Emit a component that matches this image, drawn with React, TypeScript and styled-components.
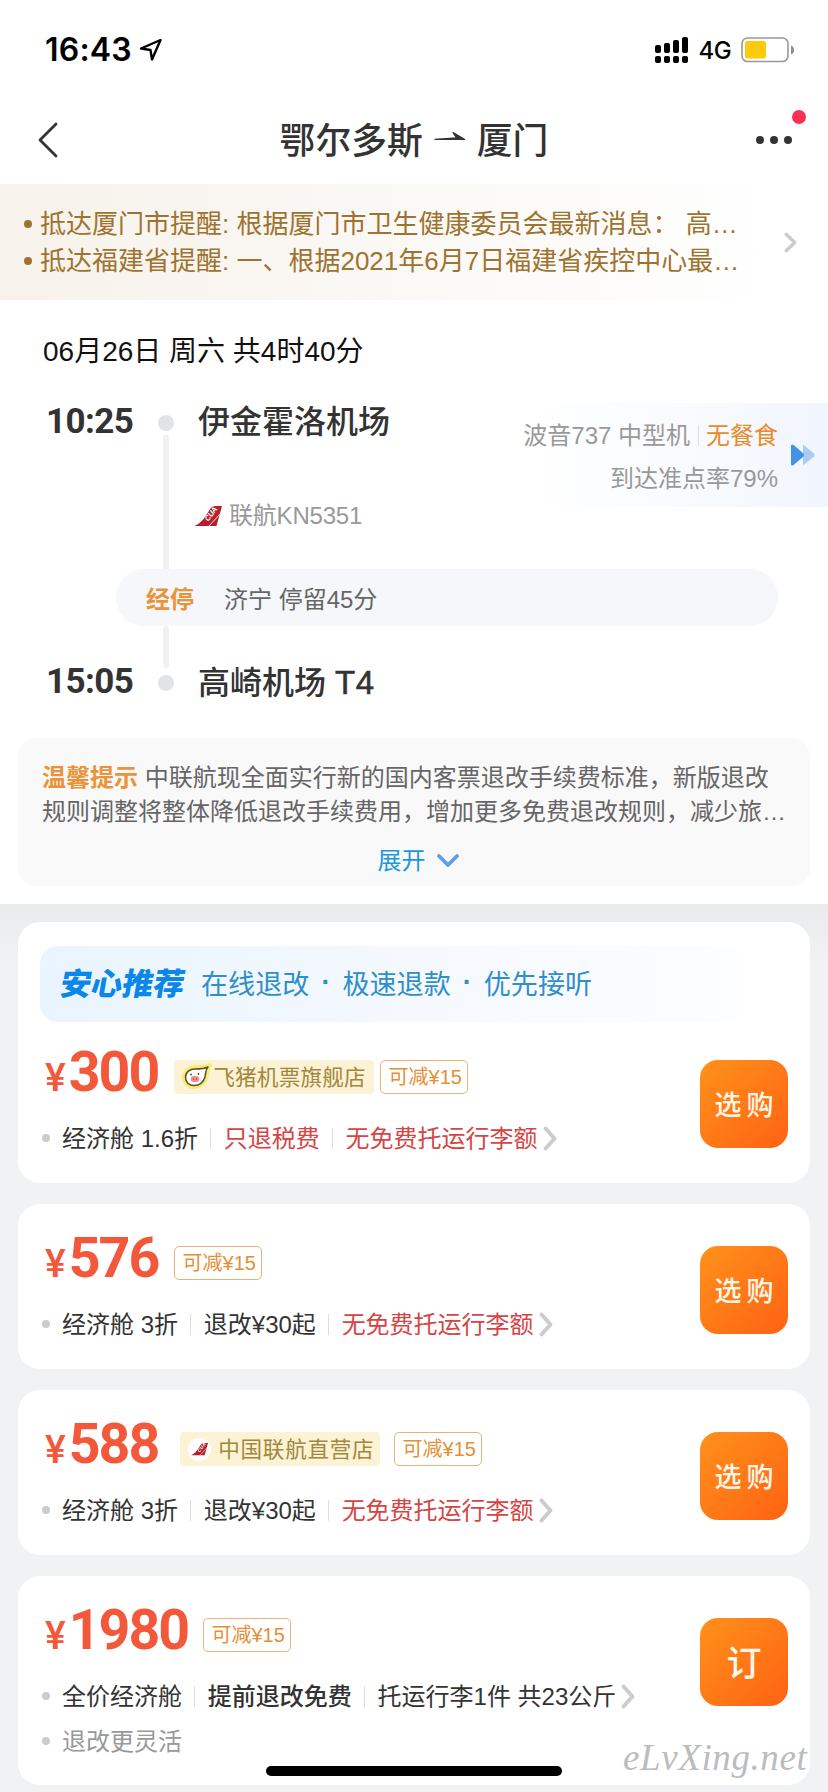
import React from "react";
import styled, { createGlobalStyle } from "styled-components";

const Global = createGlobalStyle`
  * { box-sizing: border-box; }
  body {
    margin: 0;
    background: #fff;
    font-family: "Liberation Sans", "Noto Sans CJK SC", sans-serif;
    color: #333;
  }
  svg { display: block; flex: none; overflow: visible; }
`;

const Screen = styled.div`
  position: relative;
  width: 828px;
  height: 1792px;
  overflow: hidden;
  display: flex;
  flex-direction: column;
  background: #fff;
`;

/* Status bar */
const StatusBar = styled.div`
  height: 96px;
  padding: 0 33px 0 45px;
  display: flex;
  align-items: center;
  justify-content: space-between;
`;
const StatusGroup = styled.div`
  display: flex;
  align-items: center;
  height: 30px;
  margin-top: 4px;
`;
const Clock = styled.span`
  font: 600 32px/30px Inter, sans-serif;
  letter-spacing: 0.2px;
  color: #000;
  margin-right: 7px;
`;
const Network = styled.span`
  font: 500 24px/30px Inter, sans-serif;
  letter-spacing: -0.6px;
  color: #000;
  margin: 2px 10px 0 10px;
`;

/* Navigation */
const NavBar = styled.div`
  height: 88px;
  padding: 0 22px 0 38px;
  display: grid;
  grid-template-columns: 88px 1fr 104px;
  align-items: center;
`;
const Title = styled.h1`
  margin: 0;
  padding-bottom: 4px;
  display: flex;
  justify-content: center;
  align-items: center;
  gap: 11px;
  font: 500 35.8px/48px "Noto Sans CJK SC", sans-serif;
  color: #333;

  svg {
    margin-top: 2px;
  }
`;
const More = styled.div`
  justify-self: end;
`;

/* Health notice */
const Notice = styled.div`
  height: 116px;
  padding: 0 31px 0 24px;
  display: flex;
  align-items: center;
  justify-content: space-between;
  background: linear-gradient(90deg, #f7f2eb 0%, #faf8f5 45%, #fff 95%);
`;
const NoticeList = styled.div`
  display: flex;
  flex-direction: column;
  padding-top: 1px;
`;
const NoticeLine = styled.div`
  height: 37px;
  display: flex;
  align-items: center;
  gap: 8px;
  font-size: 26px;
  line-height: 37px;
  color: #9e732f;
  white-space: pre;
`;
const Bullet = styled.i<{ $color: string }>`
  flex: none;
  width: 8px;
  height: 8px;
  border-radius: 50%;
  background: ${(p) => p.$color};
`;

/* Journey */
const Journey = styled.section`
  height: 604px;
  flex: none;
  padding-top: 32px;
`;
const DateLine = styled.div`
  height: 40px;
  padding-left: 43px;
  font-size: 28px;
  line-height: 40px;
  color: #111;
`;
const Timeline = styled.div`
  margin-top: 39px;
  display: grid;
  grid-template-columns: 110px 20px 1fr;
  grid-template-rows: 24px 134px 57px 45px 24px;
  padding-left: 46px;
`;
const Time = styled.div<{ $row: number }>`
  grid-area: ${(p) => p.$row} / 1;
  font: 700 35px/22px Roboto, sans-serif;
  letter-spacing: -0.6px;
  color: #333;
`;
const Stop = styled.i<{ $row: number }>`
  grid-area: ${(p) => p.$row} / 2;
  place-self: center;
  width: 16px;
  height: 16px;
  border-radius: 50%;
  background: #e2e3e6;
`;
const Track = styled.i<{ $row: number; $height: number }>`
  grid-area: ${(p) => p.$row} / 2;
  justify-self: center;
  width: 6px;
  height: ${(p) => p.$height}px;
  border-radius: 3px;
  background: #f1f1f2;
`;
const Airport = styled.div<{ $row: number }>`
  grid-area: ${(p) => p.$row} / 3;
  padding-left: 22px;
  font: 500 32px/23px "Liberation Sans", "Noto Sans CJK SC", sans-serif;
  color: #333;
  white-space: pre;
`;
const Terminal = styled.span`
  font-size: 33px;
  letter-spacing: 0.8px;
  -webkit-text-stroke: 0.6px #333;
`;
const Flight = styled.div`
  grid-area: 2 / 3;
  padding: 65px 0 0 18px;
  height: 97px;
  display: flex;
  align-items: center;
  gap: 7px;
  font-size: 24px;
  letter-spacing: -0.2px;
  line-height: 32px;
  color: #999;
`;
const PlaneInfo = styled.div`
  grid-area: 1 / 3 / 3 / 4;
  justify-self: end;
  margin-top: -8px;
  width: 330px;
  height: 104px;
  padding-right: 13px;
  display: flex;
  align-items: center;
  justify-content: flex-end;
  gap: 13px;
  background: linear-gradient(90deg, #fff 8%, #f9fbfe 55%, #f1f5fd 100%);
`;
const PlaneText = styled.div`
  display: flex;
  flex-direction: column;
  align-items: flex-end;
  margin-top: 3px;
  font-size: 24px;
  line-height: 43px;
  color: #999;
  white-space: pre;
`;
const PlaneRow = styled.div`
  display: flex;
  align-items: center;
`;
const Meal = styled.span`
  color: #ea8a2a;
`;
const Rule = styled.i<{ $gap: number }>`
  width: 1px;
  height: 21px;
  margin: 0 ${(p) => p.$gap}px;
  background: #ddd;
`;
const Layover = styled.div`
  grid-area: 3 / 1 / 4 / 4;
  margin: 0 50px 0 70px;
  padding: 0 0 1px 30px;
  border-radius: 29px;
  background: #f6f7fa;
  display: flex;
  align-items: center;
  gap: 30px;
  font-size: 24px;
  color: #666;
`;
const Accent = styled.b`
  font-weight: 700;
  color: #ea9338;
`;

/* Reminder */
const Reminder = styled.div`
  margin: 43px 18px 0;
  height: 148px;
  padding: 23px 0 0 24px;
  border-radius: 18px;
  background: #f9f9f9;
  color: #666;
  font-size: 24px;
  line-height: 34px;
  white-space: pre;
`;
const Expand = styled.div`
  margin: 15px 18px 0 0;
  display: flex;
  justify-content: center;
  align-items: center;
  gap: 11px;
  padding-left: 2px;
  color: #1c97de;
`;

/* Offers */
const Offers = styled.main`
  flex: 1;
  padding: 18px 18px 0;
  display: flex;
  flex-direction: column;
  gap: 21px;
  background: linear-gradient(180deg, #e9eaec 0, #f1f2f4 60px);
`;
const Card = styled.article<{ $height: number }>`
  flex: none;
  height: ${(p) => p.$height}px;
  border-radius: 22px;
  background: #fff;
`;
const BannerSpace = styled.div`
  height: 24px;
`;
const Banner = styled.div`
  height: 76px;
  margin: 0 72px 0 22px;
  padding: 0 0 4px 21px;
  border-radius: 18px 0 0 18px;
  display: flex;
  align-items: center;
  background: linear-gradient(90deg, #e9f4fe 0%, #f3f8fe 45%, #fbfcff 90%, #fdfeff 100%);
`;
const BannerLogo = styled.span`
  font: 900 31px/40px "Noto Sans CJK SC", sans-serif;
  transform: skewX(-10deg);
  color: #0b86ea;
  margin-right: 16px;
`;
const BannerText = styled.span`
  font-size: 27.1px;
  color: #2f8fc8;
`;
const BannerDot = styled.span`
  width: 33px;
  text-align: center;
  font: 700 27px/40px "Liberation Sans", sans-serif;
  color: #2f8fc8;
`;
const Body = styled.div<{ $top: number }>`
  padding: ${(p) => p.$top}px 22px 0 24px;
  display: flex;
  justify-content: space-between;
`;
const PriceRow = styled.div`
  height: 34px;
  display: flex;
  align-items: center;
  padding-left: 3px;
`;
const Price = styled.div`
  font: 700 55.5px/34px Roboto, sans-serif;
  letter-spacing: -2px;
  margin-bottom: 3px;
  color: #f4583a;
`;
const Yen = styled.span`
  font-size: 39px;
  font-weight: 500;
  margin-right: 5px;
`;
const Shop = styled.div<{ $left: number; $spacing: number }>`
  width: 200px;
  height: 34px;
  margin-left: ${(p) => p.$left}px;
  padding: 0 0 3px 7px;
  border-radius: 4px;
  display: flex;
  align-items: center;
  background: #fcf2d6;
  font-size: 21.6px;
  letter-spacing: ${(p) => p.$spacing}px;
  color: #a2883a;
  white-space: nowrap;

  svg {
    margin-top: 2px;
  }
`;
const Coupon = styled.div<{ $left: number }>`
  width: 88px;
  height: 34px;
  margin-left: ${(p) => p.$left}px;
  padding-left: 2px;
  border: 1px solid #e9b276;
  border-radius: 5px;
  font-size: 20px;
  line-height: 32px;
  text-align: center;
  white-space: nowrap;
  color: #e38f35;
`;
const Detail = styled.div<{ $top: number; $color: string }>`
  height: 34px;
  margin-top: ${(p) => p.$top}px;
  display: flex;
  align-items: center;
  font-size: 24px;
  color: ${(p) => p.$color};
  white-space: pre;
`;
const DetailText = styled.span<{ $tone?: "red" | "bold" }>`
  padding-bottom: 3px;
  color: ${(p) => (p.$tone === "red" ? "#d64545" : "inherit")};
  font-weight: ${(p) => (p.$tone === "bold" ? 500 : 400)};
`;
const DetailGap = styled.span`
  width: 12px;
`;
const ChevronGap = styled.span`
  width: 5px;
`;
const Buy = styled.button<{ $single?: boolean }>`
  flex: none;
  width: 88px;
  height: 88px;
  padding: ${(p) => (p.$single ? "0 0 2px" : "0 0 1px 5px")};
  border: 0;
  border-radius: 18px;
  background: linear-gradient(135deg, #ff8f1a 5%, #ff6214 100%);
  color: #fff8ea;
  font: 500 ${(p) => (p.$single ? 35 : 27)}px/40px "Noto Sans CJK SC", sans-serif;
  letter-spacing: ${(p) => (p.$single ? 0 : 5)}px;
  white-space: nowrap;
`;

const HomeBar = styled.div`
  position: absolute;
  left: 266px;
  top: 1766px;
  width: 296px;
  height: 10px;
  border-radius: 5px;
  background: #000;
`;
const Watermark = styled.div`
  position: absolute;
  left: 623px;
  top: 1736px;
  font: italic 400 37px/44px "Liberation Serif", serif;
  letter-spacing: 0.6px;
  color: #bbbcbe;
`;

const Chevron = ({ w, h, s }: { w: number; h: number; s: number }) => (
  <svg width={w} height={h} fill="none" stroke="#cccccd" strokeWidth={s} strokeLinecap="round" strokeLinejoin="round">
    <path d={`M${s / 2 + 0.5} ${s / 2 + 0.5}L${w - s / 2 - 0.5} ${h / 2}L${s / 2 + 0.5} ${h - s / 2 - 0.5}`} />
  </svg>
);

const TailLogo = ({ width }: { width: number }) => (
  <svg width={width} height={(width * 20) / 28} viewBox="0 0 28 20">
    <path d="M0 20C7 18 12 10 16 3Q18 0 21 0H28L22.5 20Z" fill="#b7202b" />
    <path d="M15 20L27 7" stroke="#fff" strokeWidth="0.9" />
    <text x="0" y="0" transform="translate(14 16) rotate(-53) skewX(-10)" fontFamily="Liberation Sans" fontWeight="700" fontSize="7.5" fill="#fff">
      CUA
    </text>
  </svg>
);

const PigLogo = () => (
  <svg width="32" height="28" viewBox="0 0 32 28">
    <path
      d="M29 2C26 5 27 9 25.500 14C24 20 19 24 13 24C7 24 3 20 3 14.500C3 8 8 4.500 14 4.500C20 4.500 24 4 29 2Z"
      fill="none"
      stroke="#f6ec7a"
      strokeWidth="4"
      strokeLinejoin="round"
    />
    <path
      d="M27 4C24 7 25 10 24 14C22.500 19 18.500 22.500 13 22.500C8 22.500 4.500 19 4.500 14.500C4.500 9 9 6 14 6C19 6 23 6 27 4Z"
      fill="#fff"
      stroke="#5d5026"
      strokeWidth="1.500"
      strokeLinejoin="round"
    />
    <ellipse cx="14" cy="16" rx="4.300" ry="3.300" fill="#f28d92" />
    <path d="M12.500 15V17M15.500 15V17" stroke="#c9485a" strokeWidth="1" />
    <circle cx="10" cy="11.500" r="0.900" fill="#444" />
    <circle cx="17.500" cy="11" r="0.900" fill="#444" />
  </svg>
);

const TailBadge = styled.span`
  width: 23px;
  height: 23px;
  margin: 3px 7px 0 1px;
  border-radius: 50%;
  background: #fff;
  display: flex;
  align-items: center;
  justify-content: center;

  svg {
    margin-top: 0;
  }
`;

type Part = { text: string; tone?: "red" | "bold" };
type Offer = {
  price: string;
  shop?: "fliggy" | "cua";
  couponLeft: number;
  parts: Part[];
  extra?: string;
  action: string;
  banner?: boolean;
  height: number;
};

const offers: Offer[] = [
  {
    price: "300",
    shop: "fliggy",
    couponLeft: 6,
    parts: [{ text: "经济舱 1.6折" }, { text: "只退税费", tone: "red" }, { text: "无免费托运行李额", tone: "red" }],
    action: "选购",
    banner: true,
    height: 261,
  },
  {
    price: "576",
    couponLeft: 16,
    parts: [{ text: "经济舱 3折" }, { text: "退改¥30起" }, { text: "无免费托运行李额", tone: "red" }],
    action: "选购",
    height: 165,
  },
  {
    price: "588",
    shop: "cua",
    couponLeft: 14,
    parts: [{ text: "经济舱 3折" }, { text: "退改¥30起" }, { text: "无免费托运行李额", tone: "red" }],
    action: "选购",
    height: 165,
  },
  {
    price: "1980",
    couponLeft: 15,
    parts: [{ text: "全价经济舱" }, { text: "提前退改免费", tone: "bold" }, { text: "托运行李1件 共23公斤" }],
    extra: "退改更灵活",
    action: "订",
    height: 209,
  },
];

const OfferCard = ({ offer }: { offer: Offer }) => (
  <Card $height={offer.height}>
    {offer.banner && (
      <>
        <BannerSpace />
        <Banner>
          <BannerLogo>安心推荐</BannerLogo>
          <BannerText>在线退改</BannerText>
          <BannerDot>·</BannerDot>
          <BannerText>极速退款</BannerText>
          <BannerDot>·</BannerDot>
          <BannerText>优先接听</BannerText>
        </Banner>
      </>
    )}
    <Body $top={offer.banner ? 38 : 42}>
      <div>
        <PriceRow>
          <Price>
            <Yen>¥</Yen>
            {offer.price}
          </Price>
          {offer.shop === "fliggy" && (
            <Shop $left={16} $spacing={0.2}>
              <PigLogo />
              飞猪机票旗舰店
            </Shop>
          )}
          {offer.shop === "cua" && (
            <Shop $left={22} $spacing={0.7}>
              <TailBadge>
                <TailLogo width={17} />
              </TailBadge>
              中国联航直营店
            </Shop>
          )}
          <Coupon $left={offer.couponLeft}>可减¥15</Coupon>
        </PriceRow>
        <Detail $top={27} $color="#333">
          <Bullet $color="#ccc" />
          <DetailGap />
          {offer.parts.map((part, i) => (
            <React.Fragment key={part.text}>
              {i > 0 && <Rule $gap={12.4} />}
              <DetailText $tone={part.tone}>{part.text}</DetailText>
            </React.Fragment>
          ))}
          <ChevronGap />
          <Chevron w={14} h={25} s={4} />
        </Detail>
        {offer.extra && (
          <Detail $top={11} $color="#999">
            <Bullet $color="#ccc" />
            <DetailGap />
            <DetailText>{offer.extra}</DetailText>
          </Detail>
        )}
      </div>
      <Buy $single={offer.action.length === 1}>{offer.action}</Buy>
    </Body>
  </Card>
);

export default function App() {
  return (
    <Screen>
      <Global />
      <StatusBar>
        <StatusGroup>
          <Clock>16:43</Clock>
          <svg width="24" height="24" viewBox="0 0 24 24" fill="none" stroke="#000" strokeWidth="2.4" strokeLinejoin="round">
            <path d="M2 10.500L21.500 2L13 21.500L11.500 12Z" />
          </svg>
        </StatusGroup>
        <StatusGroup>
          <svg width="34" height="26">
            {[8, 6, 3, 0].map((top, i) => (
              <g key={top}>
                <rect x={i * 9} y={top} width="6" height={16 - top} rx="2" />
                <rect x={i * 9} y="19" width="6" height="7" rx="2" />
              </g>
            ))}
          </svg>
          <Network>4G</Network>
          <svg width="54" height="26">
            <rect x="1" y="1" width="46" height="23.500" rx="5.500" fill="#fff" stroke="#999" strokeWidth="1.600" />
            <rect x="4" y="4" width="21" height="17.500" rx="2.500" fill="#fdcb0a" />
            <path d="M50 8.500C54 10 54 16 50 17.500Z" fill="#8c8c8c" />
          </svg>
        </StatusGroup>
      </StatusBar>

      <NavBar>
        <svg width="20" height="38" viewBox="0 0 20 38" fill="none" stroke="#333" strokeWidth="2.800" strokeLinecap="round" strokeLinejoin="round">
          <path d="M18 3L2 19L18 35" />
        </svg>
        <Title>
          鄂尔多斯
          <svg width="32" height="16" viewBox="0 0 32 16">
            <path d="M1 8.300H30.500L19 1.500L22.500 7Z" fill="#333" stroke="#333" strokeWidth="1.300" strokeLinejoin="round" />
          </svg>
          厦门
        </Title>
        <More>
          <svg width="52" height="62" viewBox="0 0 52 62">
            <circle cx="6" cy="31" r="4" fill="#333" />
            <circle cx="20" cy="31" r="4" fill="#333" />
            <circle cx="34" cy="31" r="4" fill="#333" />
            <circle cx="45" cy="8" r="7" fill="#fa3152" />
          </svg>
        </More>
      </NavBar>

      <Notice>
        <NoticeList>
          <NoticeLine>
            <Bullet $color="#9e732f" />
            抵达厦门市提醒: 根据厦门市卫生健康委员会最新消息： 高…
          </NoticeLine>
          <NoticeLine>
            <Bullet $color="#9e732f" />
            抵达福建省提醒: 一、根据2021年6月7日福建省疾控中心最…
          </NoticeLine>
        </NoticeList>
        <Chevron w={13} h={21} s={3.4} />
      </Notice>

      <Journey>
        <DateLine>06月26日 周六 共4时40分</DateLine>
        <Timeline>
          <Time $row={1}>10:25</Time>
          <Stop $row={1} />
          <Airport $row={1}>伊金霍洛机场</Airport>
          <Track $row={2} $height={138} />
          <Flight>
            <TailLogo width={28} />
            联航KN5351
          </Flight>
          <PlaneInfo>
            <PlaneText>
              <PlaneRow>
                波音737 中型机
                <Rule $gap={7.5} />
                <Meal>无餐食</Meal>
              </PlaneRow>
              <PlaneRow>到达准点率79%</PlaneRow>
            </PlaneText>
            <svg width="24" height="22" viewBox="0 0 24 22">
              <path d="M12 0.500L23 9.500Q24 11 23 12.500L12 21.500Z" fill="#a9ccf5" />
              <path d="M1 1Q0 0 0 2V20Q0 22 2 21.500L12.500 12.500Q13.500 11 12.500 9.500L2 0.500Z" fill="#4492e4" />
            </svg>
          </PlaneInfo>
          <Layover>
            <Accent>经停</Accent>
            <span>济宁 停留45分</span>
          </Layover>
          <Track $row={4} $height={42} />
          <Time $row={5}>15:05</Time>
          <Stop $row={5} />
          <Airport $row={5}>
            高崎机场 <Terminal>T4</Terminal>
          </Airport>
        </Timeline>
        <Reminder>
          <div>
            <Accent>温馨提示</Accent> 中联航现全面实行新的国内客票退改手续费标准，新版退改
          </div>
          <div>规则调整将整体降低退改手续费用，增加更多免费退改规则，减少旅…</div>
          <Expand>
            展开
            <svg width="22" height="14" viewBox="0 0 22 14" fill="none" stroke="#5d9fe0" strokeWidth="3.800" strokeLinecap="round" strokeLinejoin="round">
              <path d="M2 2L11 11L20 2" />
            </svg>
          </Expand>
        </Reminder>
      </Journey>

      <Offers>
        {offers.map((offer) => (
          <OfferCard key={offer.price} offer={offer} />
        ))}
      </Offers>
      <HomeBar />
      <Watermark>eLvXing.net</Watermark>
    </Screen>
  );
}
